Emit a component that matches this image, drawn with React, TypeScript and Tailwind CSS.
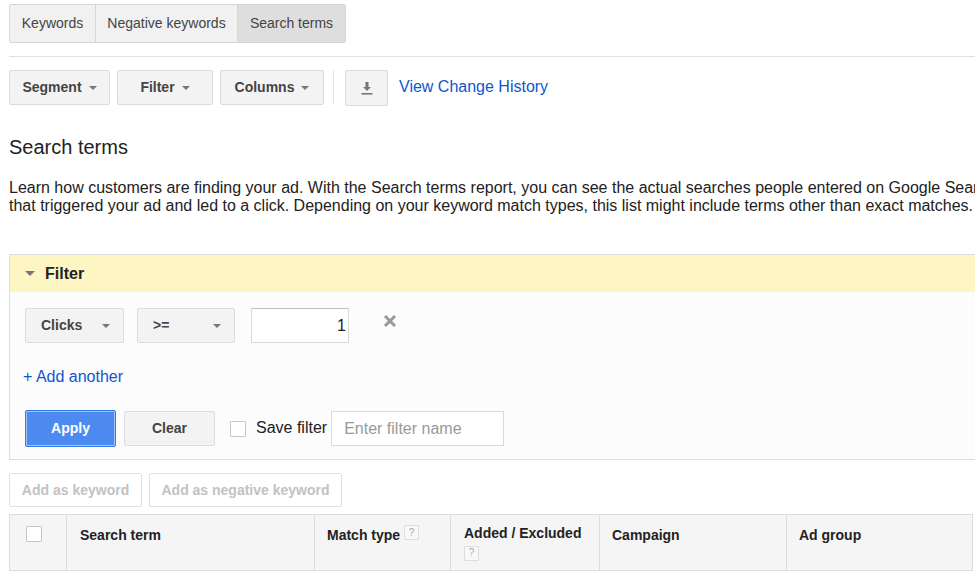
import React from 'react';

const Caret = ({ className = '' }: { className?: string }) => (
  <span className={`inline-block w-0 h-0 border-x-[4px] border-t-[4px] border-x-transparent border-t-[#777] ${className}`} />
);

const ToolButton = ({ label, w }: { label: string; w: string }) => (
  <button className={`${w} h-[35px] flex items-center justify-center gap-[7px] rounded-[2px] border border-[#dcdcdc] bg-[#f3f3f3] text-[14px] font-bold text-[#444]`}>
    {label}
    <Caret className="mt-[1px]" />
  </button>
);

const Help = () => (
  <span className="inline-flex items-center justify-center w-[15px] h-[15px] border border-[#ddd] bg-[#f8f8f8] text-[10px] font-normal text-[#aaa] rounded-[1px]">?</span>
);

export default function App() {
  return (
    <div className="w-[975px] h-[571px] overflow-hidden bg-white text-[#222]" style={{ fontFamily: '"Liberation Sans", Arial, sans-serif' }}>
      <div className="w-[1100px] pl-[9px]">
        {/* tabs */}
        <div className="pt-[4px] flex">
          <div className="flex h-[39px] rounded-[2px] border border-[#d6d6d6] text-[14px] text-[#444] overflow-hidden">
            <div className="w-[86px] flex items-center justify-center bg-[#f1f1f1] border-r border-[#d6d6d6]">Keywords</div>
            <div className="w-[142px] flex items-center justify-center bg-[#f1f1f1] border-r border-[#d6d6d6]">Negative keywords</div>
            <div className="w-[107px] flex items-center justify-center bg-[#dedede]">Search terms</div>
          </div>
        </div>
        <div className="mt-[13px] border-t border-[#e0e0e0]" />

        {/* toolbar */}
        <div className="mt-[12px] flex items-center">
          <ToolButton label="Segment" w="w-[101px]" />
          <div className="w-[7px]" />
          <ToolButton label="Filter" w="w-[96px]" />
          <div className="w-[7px]" />
          <ToolButton label="Columns" w="w-[104px]" />
          <div className="ml-[9px] w-px h-[35px] bg-[#e5e5e5]" />
          <button className="ml-[11px] w-[43px] h-[36px] mt-[1px] flex items-center justify-center rounded-[2px] border border-[#dcdcdc] bg-[#f3f3f3]">
            <svg width="12" height="14" viewBox="0 0 12 14">
              <path d="M4.5 1h3v5h2.5L6 10 2 6h2.5z" fill="#777" />
              <rect x="0.5" y="12" width="11" height="1.6" fill="#777" />
            </svg>
          </button>
          <a className="ml-[11px] -mt-[2px] text-[16px] text-[#1155cc] cursor-pointer">View Change History</a>
        </div>

        {/* heading */}
        <h1 className="mt-[29px] text-[20px] leading-[24px] text-[#222]">Search terms</h1>
        <p className="mt-[20px] text-[16px] leading-[18px] text-[#222] whitespace-nowrap">
          Learn how customers are finding your ad. With the Search terms report, you can see the actual searches people entered on Google Search
          <br />
          that triggered your ad and led to a click. Depending on your keyword match types, this list might include terms other than exact matches.
        </p>

        {/* filter panel */}
        <div className="mt-[39px] border-y border-l border-[#ddd]">
          <div className="h-[37px] bg-[#fdf5c2] flex items-center pl-[15px]">
            <Caret className="border-t-[#555] border-x-[5px] border-t-[5px]" />
            <span className="ml-[10px] text-[16px] font-bold text-[#222]">Filter</span>
          </div>
          <div className="bg-[#fcfcfc] pl-[15px] pt-[16px] pb-[12px]">
            <div className="flex items-center">
              <button className="w-[99px] h-[35px] flex items-center justify-between pl-[15px] pr-[13px] rounded-[2px] border border-[#dcdcdc] bg-[#f3f3f3] text-[14px] font-bold text-[#444]">
                Clicks
                <Caret />
              </button>
              <button className="ml-[13px] w-[98px] h-[35px] flex items-center justify-between pl-[15px] pr-[13px] rounded-[2px] border border-[#dcdcdc] bg-[#f3f3f3] text-[14px] font-bold text-[#444]">
                &gt;=
                <Caret />
              </button>
              <div className="ml-[16px] w-[98px] h-[35px] border border-[#d9d9d9] border-t-[#c0c0c0] bg-white flex items-center justify-end pr-[2px] text-[16px] text-[#222]">1</div>
              <svg className="ml-[34px] -mt-[9px]" width="14" height="14" viewBox="0 0 14 14">
                <path d="M2 2L12 12M12 2L2 12" stroke="#999" strokeWidth="3" />
              </svg>
            </div>
            <a className="block mt-[24px] -ml-[2px] text-[16px] text-[#1155cc] leading-[20px] cursor-pointer">+ Add another</a>
            <div className="mt-[23px] flex items-center">
              <button className="w-[91px] h-[37px] rounded-[2px] border border-[#3079ed] bg-[#4d8af0] text-[14px] font-bold text-white shadow-[inset_0_0_0_1px_#ffffff80]">Apply</button>
              <button className="ml-[8px] w-[91px] h-[35px] rounded-[2px] border border-[#dcdcdc] bg-[#f3f3f3] text-[14px] font-bold text-[#444]">Clear</button>
              <span className="ml-[15px] w-[16px] h-[16px] border border-[#c6c6c6] bg-white rounded-[1px]" />
              <span className="ml-[10px] -mt-[2px] text-[16px] text-[#222]">Save filter</span>
              <div className="ml-[4px] w-[173px] h-[35px] border border-[#d9d9d9] bg-white flex items-center pl-[12px] text-[16px] text-[#999]">Enter filter name</div>
            </div>
          </div>
        </div>

        {/* action buttons */}
        <div className="mt-[13px] flex">
          <button className="w-[133px] h-[34px] rounded-[2px] border border-[#e0e0e0] bg-white text-[14px] font-bold text-[#c2c2c2]">Add as keyword</button>
          <button className="ml-[7px] w-[193px] h-[34px] rounded-[2px] border border-[#e0e0e0] bg-white text-[14px] font-bold text-[#c2c2c2]">Add as negative keyword</button>
        </div>

        {/* table header */}
        <div className="mt-[7px] w-[964px] h-[57px] flex bg-[#f5f5f5] border border-[#ddd] text-[14px] font-bold text-[#222]">
          <div className="w-[57px] border-r border-[#ddd] pl-[16px] pt-[11px]">
            <span className="block w-[16px] h-[16px] border border-[#c6c6c6] bg-white rounded-[1px]" />
          </div>
          <div className="w-[248px] border-r border-[#ddd] pl-[13px] pt-[10px]">Search term</div>
          <div className="w-[136px] border-r border-[#ddd] pl-[12px] pt-[10px] flex items-start gap-[4px]">
            Match type <Help />
          </div>
          <div className="w-[149px] border-r border-[#ddd] pl-[13px] pt-[10px] leading-[16px]">
            Added / Excluded
            <div className="mt-[2px]"><Help /></div>
          </div>
          <div className="w-[187px] border-r border-[#ddd] pl-[12px] pt-[10px]">Campaign</div>
          <div className="flex-1 pl-[12px] pt-[10px]">Ad group</div>
        </div>
      </div>
    </div>
  );
}
